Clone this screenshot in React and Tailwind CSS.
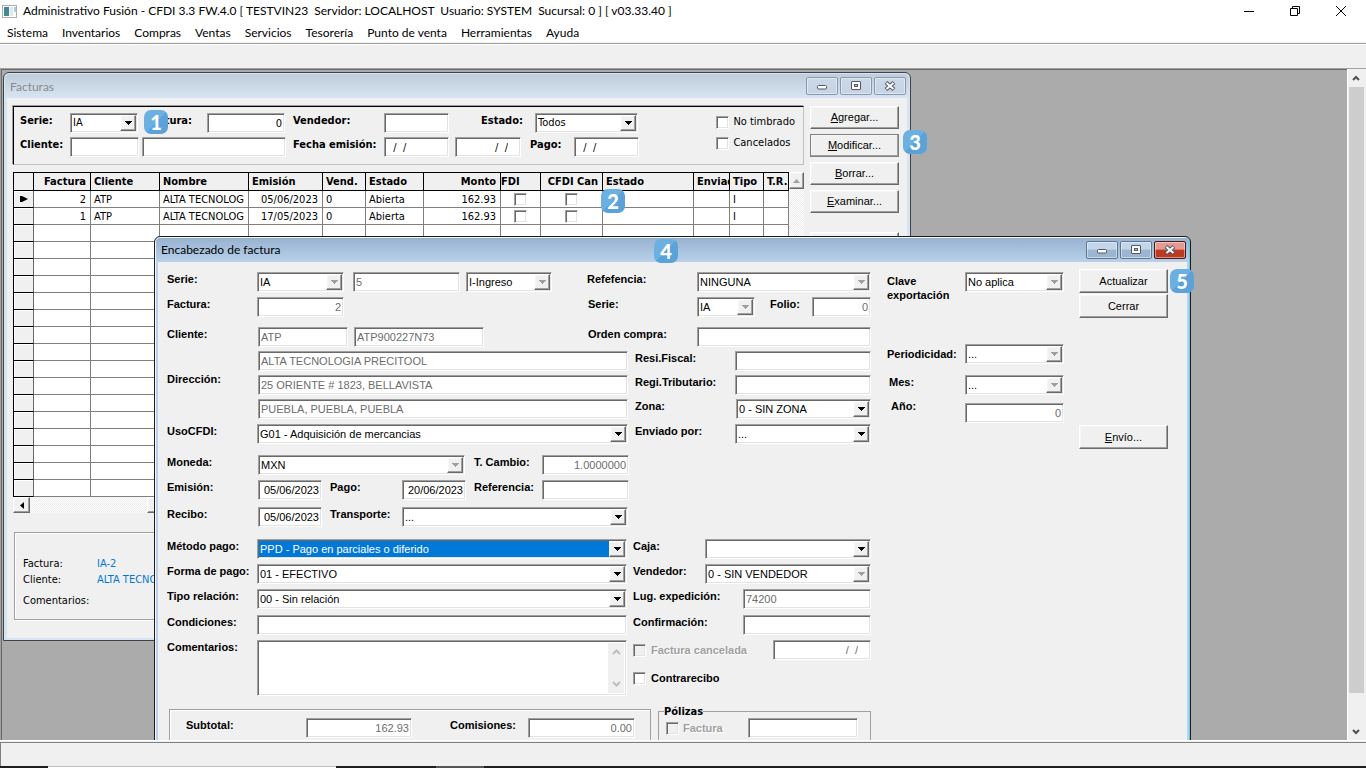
// src/App.jsx

// Purpose: Desktop-style invoicing app: menu bar, MDI workspace, invoice list and invoice header dialog.

import React from 'react'
import clsx from 'clsx'

// --- shared classic bevels ---
const SUNKEN =
  'border border-t-[#a0a0a0] border-l-[#a0a0a0] border-b-white border-r-white shadow-[inset_1px_1px_0_#696969,inset_-1px_-1px_0_#e3e3e3]'
const RAISED =
  'border border-t-white border-l-white border-b-[#696969] border-r-[#696969] shadow-[inset_-1px_-1px_0_#a0a0a0,inset_1px_1px_0_#f6f6f6] bg-[#f0f0f0]'
const DITHER =
  'bg-[repeating-conic-gradient(#ffffff_0_25%,#ececec_0_50%)] bg-[length:2px_2px]'

function Label({ id, className, children }) {
  return (
    <label htmlFor={id} className={clsx('shrink-0 whitespace-nowrap font-bold leading-[14px]', className)}>
      {children}
    </label>
  )
}

function TextBox({ className, ...props }) {
  return (
    <input
      type="text"
      className={clsx('h-5 min-w-0 shrink-0 bg-white px-0.5 outline-none disabled:text-[#6d6d6d]', SUNKEN, className)}
      {...props}
    />
  )
}

function Combo({ id, value, disabled, selected, className, label }) {
  return (
    <div className={clsx('relative h-5 shrink-0 bg-white p-px', SUNKEN, className)}>
      <select
        id={id}
        aria-label={label}
        disabled={disabled}
        defaultValue={value}
        className={clsx(
          'block h-full w-full appearance-none pl-px pr-4 outline-none disabled:opacity-100',
          selected ? 'bg-[#0078d7] text-white' : 'bg-white text-black'
        )}
      >
        <option>{value}</option>
      </select>
      <span
        className={clsx('pointer-events-none absolute inset-y-px right-px flex w-4 items-center justify-center', RAISED)}
      >
        <svg width="7" height="4" viewBox="0 0 7 4" shapeRendering="crispEdges" aria-hidden="true">
          <path d="M0 0h7L3.5 4z" fill={disabled ? '#a0a0a0' : '#000'} />
        </svg>
      </span>
    </div>
  )
}

function Check({ id, disabled, className, label }) {
  return (
    <input
      id={id}
      type="checkbox"
      disabled={disabled}
      aria-label={label}
      className={clsx('block h-[13px] w-[13px] shrink-0 appearance-none bg-white disabled:bg-[#f0f0f0]', SUNKEN, className)}
    />
  )
}

function PushButton({ hotkey, children, className }) {
  return (
    <button type="button" className={clsx('w-full', RAISED, className)}>
      {hotkey && <span className="underline">{hotkey}</span>}
      {children}
    </button>
  )
}

// Numbered help marker
function Badge({ n, className }) {
  return (
    <span
      className={clsx(
        "absolute z-10 flex h-6 w-6 items-center justify-center rounded-[7px] bg-linear-135 from-[#6cb0e2] from-50% to-[#5ba2da] to-50% font-['Lato',sans-serif] text-[20px] font-black leading-none text-white",
        className
      )}
    >
      {n}
    </span>
  )
}

// Minimize / maximize / close of an MDI child
function CaptionButtons({ active }) {
  const base = 'flex h-[18px] w-8 items-center justify-center rounded-[2px] border shadow-[inset_0_0_0_1px_rgba(255,255,255,0.45)]'
  const normal = active
    ? 'border-[#5f7590] bg-linear-to-b from-[#c2d5ea] from-45% to-[#9cb6d2] to-50%'
    : 'border-[#8996ad] bg-linear-to-b from-[#cbd8e6] to-[#c5d3e3]'
  const close = active
    ? 'border-[#4d1614] bg-linear-to-b from-[#e39a8f] from-45% to-[#bd3a22] to-50%'
    : normal
  return (
    <div className="flex gap-0.5 pt-[3px]">
      <button type="button" aria-label="Minimizar" className={clsx(base, normal)}>
        <svg width="12" height="10" viewBox="0 0 12 10">
          <rect x="1.5" y="4.5" width="9" height="3.5" rx="1" fill="#fff" stroke="#535666" />
        </svg>
      </button>
      <button type="button" aria-label="Maximizar" className={clsx(base, normal)}>
        <svg width="12" height="10" viewBox="0 0 12 10">
          <rect x="1.5" y="0.5" width="9" height="8" rx="0.5" fill="#fff" stroke="#535666" />
          <rect x="4.5" y="3.5" width="3" height="2" fill="#b8cbe0" stroke="#535666" />
        </svg>
      </button>
      <button type="button" aria-label="Cerrar ventana" className={clsx(base, close)}>
        <svg width="12" height="10" viewBox="0 0 12 10">
          <path d="M2 1.5l8 7M10 1.5l-8 7" stroke="#535666" strokeWidth="4" />
          <path d="M2.5 2l7 6M9.5 2l-7 6" stroke="#fff" strokeWidth="2" />
        </svg>
      </button>
    </div>
  )
}

// --- invoice list columns ---
const COLUMNS = [
  { name: 'Factura', width: 'w-[57px]', right: true },
  { name: 'Cliente', width: 'w-[69px]' },
  { name: 'Nombre', width: 'w-[89px]' },
  { name: 'Emisión', width: 'w-[74px]', dataRight: true },
  { name: 'Vend.', width: 'w-[43px]' },
  { name: 'Estado', width: 'w-[58px]' },
  { name: 'Monto', width: 'w-[77px]', right: true },
  { name: 'FDI', width: 'w-10', check: true, flush: true },
  { name: 'CFDI Can', width: 'w-[62px]', right: true, check: true },
  { name: 'Estado', width: 'w-[91px]' },
  { name: 'Enviad', width: 'w-9' },
  { name: 'Tipo', width: 'w-[34px]' },
  { name: 'T.R.', width: 'w-[25px]' },
]

const INVOICES = [
  ['2', 'ATP', 'ALTA TECNOLOG', '05/06/2023', '0', 'Abierta', '162.93', '', '', '', '', 'I', ''],
  ['1', 'ATP', 'ALTA TECNOLOG', '17/05/2023', '0', 'Abierta', '162.93', '', '', '', '', 'I', ''],
]

function InvoiceTable() {
  const rows = [...INVOICES, ...Array(16).fill(null)]
  return (
    <table className="w-[775px] table-fixed border-separate border-spacing-0 border-l border-t border-black bg-white">
      <thead>
        <tr className="h-[18px] bg-[#f0f0f0] text-left">
          <th className="w-5 border-b border-r border-black p-0" aria-label="Selector" />
          {COLUMNS.map((c, i) => (
            <th
              key={i}
              className={clsx(
                'overflow-hidden whitespace-nowrap border-b border-r border-black p-0 pt-px leading-4',
                c.width,
                c.right ? 'pr-1 text-right' : c.flush ? '' : 'pl-[3px]'
              )}
            >
              {c.name}
            </th>
          ))}
        </tr>
      </thead>
      <tbody>
        {rows.map((row, r) => (
          <tr key={r} className="h-[17px]">
            <td className="border-b border-r border-b-black border-r-[#696969] bg-[#f0f0f0] p-0 shadow-[inset_1px_1px_0_#fff]">
              {r === 0 && (
                <svg className="ml-1.5" width="9" height="6" viewBox="0 0 9 6" aria-hidden="true">
                  <path d="M0 0h2l6 3-6 3H0z" fill="#000" />
                </svg>
              )}
            </td>
            {COLUMNS.map((c, i) => (
              <td
                key={i}
                className={clsx(
                  'overflow-hidden whitespace-nowrap border-b border-r border-[#808080] p-0',
                  !c.check && 'pt-px leading-[15px]',
                  !c.check && (c.right || c.dataRight ? 'pr-1 text-right' : 'pl-[3px]')
                )}
              >
                {row && (c.check ? <Check className="mx-auto" label={`${c.name} ${row[0]}`} /> : row[i])}
              </td>
            ))}
          </tr>
        ))}
      </tbody>
    </table>
  )
}

function FacturasWindow() {
  return (
    <section className="absolute left-px top-0.5 h-[569px] w-[908px] rounded-t-[6px] border border-[#3f4347] bg-[#d7e4f2] p-px font-['DejaVu_Sans_Condensed',sans-serif] text-[11px]">
      <header className="flex h-6 justify-between rounded-t-[5px] bg-linear-to-b from-[#bfcddb] to-[#d7e4f2] pl-[5px] pr-[3px]">
        <h2 className="pt-[3px] font-['Lato',sans-serif] text-[12px] leading-5 text-[#8b8b8b]">Facturas</h2>
        <CaptionButtons />
      </header>

      <div className="mx-0.5 flex h-[540px] bg-[#f0f0f0] pl-1.5 pt-2">
        <div className="w-[791px]">
          {/* Filters */}
          <div className="relative flex h-[59px] justify-between border border-b-[#c0c0c0] border-l-black border-r-[#c0c0c0] border-t-black pl-1.5 pr-2 pt-1.5 shadow-[-1px_-1px_0_#a0a0a0]">
            <div className="flex flex-col gap-1 [&_label]:pt-px">
              <div className="flex h-5">
                <Label id="f-serie" className="w-[50px]">Serie:</Label>
                <Combo id="f-serie" value="IA" className="w-[68px]" />
                <Label id="f-factura" className="w-[54px] text-right">Factura:</Label>
                <TextBox id="f-factura" defaultValue="0" className="ml-[15px] w-[78px] text-right" />
                <Label id="f-vendedor" className="ml-2 w-[91px]">Vendedor:</Label>
                <TextBox id="f-vendedor" className="w-[65px]" />
                <Label id="f-estado" className="ml-8 w-[54px]">Estado:</Label>
                <Combo id="f-estado" value="Todos" className="w-[103px]" />
              </div>
              <div className="flex h-5">
                <Label id="f-cliente" className="w-[50px]">Cliente:</Label>
                <TextBox id="f-cliente" className="w-[69px]" />
                <TextBox aria-label="Nombre del cliente" className="ml-[3px] w-36" />
                <Label id="f-fecha" className="ml-[7px] w-[91px]">Fecha emisión:</Label>
                <TextBox id="f-fecha" defaultValue="  /  /" className="w-[65px]" />
                <TextBox aria-label="Fecha emisión final" defaultValue="  /  /" className="ml-1.5 w-[66px] pr-3 text-right" />
                <Label id="f-pago" className="ml-[9px] w-11">Pago:</Label>
                <TextBox id="f-pago" defaultValue="  /  /" className="w-[65px]" />
              </div>
            </div>
            <div className="flex flex-col gap-[5px] pt-px">
              <label className="flex items-center gap-1 leading-4"><Check />No timbrado</label>
              <label className="flex items-center gap-1 leading-4"><Check />Cancelados</label>
            </div>
            <Badge n="1" className="left-[130px] top-[3px]" />
          </div>

          {/* Invoice grid with its scroll bars */}
          <div className="relative mt-[7px] flex">
            <InvoiceTable />
            <div className={clsx('w-4', DITHER)}>
              <div className={clsx('flex h-[17px] items-center justify-center', RAISED)}>
                <svg width="7" height="4" viewBox="0 0 7 4"><path d="M0 4h7L3.5 0z" fill="#a0a0a0" /></svg>
              </div>
            </div>
            <Badge n="2" className="left-[588px] top-[17px]" />
          </div>
          <div className={clsx('flex h-4', DITHER)}>
            <div className={clsx('flex w-[17px] items-center justify-center', RAISED)}>
              <svg width="4" height="7" viewBox="0 0 4 7"><path d="M4 0v7L0 3.5z" fill="#000" /></svg>
            </div>
            <div className={clsx('ml-[117px] w-[200px]', RAISED)} />
          </div>

          {/* Detail of the selected invoice */}
          <dl className="ml-px mt-[19px] grid h-[88px] grid-cols-[74px_1fr] content-start border border-[#a0a0a0] pl-2 pt-[23px] leading-4 shadow-[inset_1px_1px_0_#fff,1px_1px_0_#fff]">
            <dt>Factura:</dt>
            <dd className="text-[#0078d7]">IA-2</dd>
            <dt>Cliente:</dt>
            <dd className="text-[#0078d7]">ALTA TECNOLOGIA PRECITOOL</dd>
            <dt className="mt-[5px]">Comentarios:</dt>
          </dl>
        </div>

        <div className="relative ml-1.5 flex w-[89px] flex-col gap-[5px] font-['Liberation_Sans',sans-serif]">
          <PushButton hotkey="A" className="h-[23px]">gregar...</PushButton>
          <PushButton hotkey="M" className="h-[23px] outline outline-[#808080] -outline-offset-1">odificar...</PushButton>
          <PushButton hotkey="B" className="h-[23px]">orrar...</PushButton>
          <PushButton hotkey="E" className="h-[23px]">xaminar...</PushButton>
          <PushButton hotkey="I" className="mt-3.5 h-[23px]">mprimir...</PushButton>
          <Badge n="3" className="left-[93px] top-6" />
        </div>
      </div>
    </section>
  )
}

function EncabezadoWindow() {
  return (
    <section className="absolute left-[152px] top-[166px] h-[600px] w-[1037px] rounded-t-[6px] border border-[#1c1c1c] bg-[#b9d1ea] p-px font-['Liberation_Sans',sans-serif] text-[11px] shadow-[inset_-1px_0_0_#62cfe8,inset_1px_1px_0_#f4f8fc]">
      <header className="flex h-6 justify-between rounded-t-[4px] bg-linear-to-b from-[#97b2d0] to-[#b9d1ea] pl-[5px] pr-[3px]">
        <h2 className="pt-0.5 font-['Lato',sans-serif] text-[12px] leading-5">Encabezado de factura</h2>
        <CaptionButtons active />
      </header>
      <Badge n="4" className="left-[499px] top-0.5" />
      <Badge n="5" className="left-[1015px] top-8" />

      <div className="mx-0.5 flex h-[572px] bg-[#f0f0f0] pl-[9px] pt-[10px]">
        {/* LEFT: main form */}
        <div className="w-[704px]">
          <div className="flex h-5">
            <Label id="serie" className="w-[90px]">Serie:</Label>
            <Combo id="serie" value="IA" disabled className="w-[87px]" />
            <TextBox aria-label="Número de serie" defaultValue="5" disabled className="ml-[9px] w-[107px]" />
            <Combo label="Tipo de comprobante" value="I-Ingreso" disabled className="ml-1.5 w-[86px]" />
            <Label id="refefencia" className="ml-[35px] w-[110px]">Refefencia:</Label>
            <Combo id="refefencia" value="NINGUNA" disabled className="w-[174px]" />
          </div>
          <div className="mt-[5px] flex h-5">
            <Label id="factura" className="w-[90px]">Factura:</Label>
            <TextBox id="factura" defaultValue="2" disabled className="w-[87px] text-right" />
            <Label id="serie-ref" className="ml-[244px] w-[109px]">Serie:</Label>
            <Combo id="serie-ref" value="IA" disabled className="w-[58px]" />
            <Label id="folio" className="ml-[15px] w-[42px]">Folio:</Label>
            <TextBox id="folio" defaultValue="0" disabled className="w-[59px] text-right" />
          </div>
          <div className="mt-[10px] flex h-5">
            <Label id="cliente" className="w-[91px]">Cliente:</Label>
            <TextBox id="cliente" defaultValue="ATP" disabled className="w-[90px]" />
            <TextBox aria-label="RFC" defaultValue="ATP900227N73" disabled className="ml-1.5 w-[130px]" />
            <Label id="orden" className="ml-[104px] w-[109px]">Orden compra:</Label>
            <TextBox id="orden" className="w-[174px]" />
          </div>

          <div className="mt-1 flex">
            <Label id="direccion" className="w-[91px] self-center pb-3">Dirección:</Label>
            <div className="flex w-[370px] flex-col gap-1">
              <TextBox aria-label="Razón social" defaultValue="ALTA TECNOLOGIA PRECITOOL" disabled className="w-full" />
              <TextBox id="direccion" defaultValue="25 ORIENTE # 1823, BELLAVISTA" disabled className="w-full" />
              <TextBox aria-label="Ciudad" defaultValue="PUEBLA, PUEBLA, PUEBLA" disabled className="w-full" />
            </div>
            <div className="ml-[7px] flex flex-col gap-1">
              <div className="flex h-5">
                <Label id="resi" className="w-[100px]">Resi.Fiscal:</Label>
                <TextBox id="resi" className="w-[136px]" />
              </div>
              <div className="flex h-5">
                <Label id="regi" className="w-[100px]">Regi.Tributario:</Label>
                <TextBox id="regi" className="w-[136px]" />
              </div>
              <div className="flex h-5">
                <Label id="zona" className="w-[101px]">Zona:</Label>
                <Combo id="zona" value="0 - SIN ZONA" className="w-[135px]" />
              </div>
            </div>
          </div>

          <div className="mt-[5px] flex h-5">
            <Label id="uso" className="w-[90px]">UsoCFDI:</Label>
            <Combo id="uso" value="G01 - Adquisición de mercancias" className="w-[371px]" />
            <Label id="enviado" className="ml-[7px] w-[100px]">Enviado por:</Label>
            <Combo id="enviado" value="..." className="w-[136px]" />
          </div>

          <div className="mt-[11px] flex h-5">
            <Label id="moneda" className="w-[91px]">Moneda:</Label>
            <Combo id="moneda" value="MXN" disabled className="w-[207px]" />
            <Label id="tcambio" className="ml-[9px] w-[68px]">T. Cambio:</Label>
            <TextBox id="tcambio" defaultValue="1.0000000" disabled className="w-[87px] text-right" />
          </div>
          <div className="mt-[5px] flex h-5">
            <Label id="emision" className="w-[91px]">Emisión:</Label>
            <TextBox id="emision" defaultValue="05/06/2023" className="w-16 text-right" />
            <Label id="pago" className="ml-2 w-[72px]">Pago:</Label>
            <TextBox id="pago" defaultValue="20/06/2023" className="w-16 text-right" />
            <Label id="referencia" className="ml-2 w-[68px]">Referencia:</Label>
            <TextBox id="referencia" className="w-[87px]" />
          </div>
          <div className="mt-[7px] flex h-5">
            <Label id="recibo" className="w-[91px]">Recibo:</Label>
            <TextBox id="recibo" defaultValue="05/06/2023" className="w-16 text-right" />
            <Label id="transporte" className="ml-2 w-[72px]">Transporte:</Label>
            <Combo id="transporte" value="..." className="w-[226px]" />
          </div>

          <div className="mt-3 flex h-5">
            <Label id="metodo" className="w-[90px]">Método pago:</Label>
            <Combo id="metodo" value="PPD - Pago en parciales o diferido" selected className="w-[370px]" />
            <Label id="caja" className="ml-1.5 w-[72px]">Caja:</Label>
            <Combo id="caja" value="" className="w-[166px]" />
          </div>
          <div className="mt-[5px] flex h-5">
            <Label id="forma" className="w-[90px]">Forma de pago:</Label>
            <Combo id="forma" value="01 - EFECTIVO" className="w-[370px]" />
            <Label id="vendedor" className="ml-1.5 w-[72px]">Vendedor:</Label>
            <Combo id="vendedor" value="0 - SIN VENDEDOR" disabled className="w-[166px]" />
          </div>
          <div className="mt-[5px] flex h-5">
            <Label id="relacion" className="w-[90px]">Tipo relación:</Label>
            <Combo id="relacion" value="00 - Sin relación" className="w-[370px]" />
            <Label id="lugar" className="ml-1.5 w-[110px]">Lug. expedición:</Label>
            <TextBox id="lugar" defaultValue="74200" disabled className="w-32" />
          </div>
          <div className="mt-1.5 flex h-5">
            <Label id="condiciones" className="w-[90px]">Condiciones:</Label>
            <TextBox id="condiciones" className="w-[370px]" />
            <Label id="confirmacion" className="ml-1.5 w-[110px]">Confirmación:</Label>
            <TextBox id="confirmacion" className="w-32" />
          </div>

          <div className="mt-[5px] flex h-14">
            <Label id="comentarios" className="w-[90px]">Comentarios:</Label>
            <div className={clsx('flex w-[370px] shrink-0 bg-white p-0.5', SUNKEN)}>
              <textarea id="comentarios" className="h-full flex-1 resize-none outline-none" />
              <div className="flex w-4 flex-col items-center justify-between bg-[#f0f0f0] py-1.5 text-[#bfbfbf]">
                <svg width="9" height="6" viewBox="0 0 9 6" fill="none" stroke="currentColor" strokeWidth="2"><path d="M1 5l3.5-3.5L8 5" /></svg>
                <svg width="9" height="6" viewBox="0 0 9 6" fill="none" stroke="currentColor" strokeWidth="2"><path d="M1 1l3.5 3.5L8 1" /></svg>
              </div>
            </div>
            <div className="ml-1.5 flex flex-1 flex-col gap-2">
              <div className="flex h-5 items-center justify-between">
                <label className="flex items-center gap-[5px] font-bold text-[#a0a0a0] [text-shadow:1px_1px_0_#fff]">
                  <Check disabled />Factura cancelada
                </label>
                <TextBox aria-label="Fecha cancelación" defaultValue="/  /" disabled className="w-[98px] pr-3 text-right" />
              </div>
              <label className="flex h-5 items-center gap-[5px] font-bold"><Check />Contrarecibo</label>
            </div>
          </div>

          {/* Totals */}
          <div className="mt-[13px] flex justify-between pl-0.5">
            <div className="flex h-32 w-[482px] border border-[#a0a0a0] pl-4 pt-2 shadow-[inset_1px_1px_0_#fff]">
              <Label id="subtotal" className="w-[120px]">Subtotal:</Label>
              <TextBox id="subtotal" defaultValue="162.93" disabled className="w-[106px] text-right" />
              <Label id="comisiones" className="ml-[38px] w-[78px]">Comisiones:</Label>
              <TextBox id="comisiones" defaultValue="0.00" disabled className="w-[107px] text-right" />
            </div>
            <fieldset className="-mt-1 h-32 w-[213px] border border-[#a0a0a0] px-[7px]">
              <legend className="-ml-0.5 h-3 font-['DejaVu_Sans_Condensed',sans-serif] font-bold leading-[14px]">Pólizas</legend>
              <div className="flex justify-between pr-[5px] pt-px">
                <label className="flex items-center gap-1 font-bold text-[#a0a0a0] [text-shadow:1px_1px_0_#fff]">
                  <Check disabled />Factura
                </label>
                <TextBox aria-label="Póliza de factura" className="w-[110px]" />
              </div>
            </fieldset>
          </div>
        </div>

        {/* CENTER: export and period */}
        <div className="ml-4 w-[178px]">
          <div className="flex h-5">
            <Label id="clave" className="w-[78px] pt-0.5">Clave<br />exportación</Label>
            <Combo id="clave" value="No aplica" disabled className="w-[99px]" />
          </div>
          <div className="mt-[52px] flex h-5">
            <Label id="periodicidad" className="w-[78px] pt-[3px]">Periodicidad:</Label>
            <Combo id="periodicidad" value="..." disabled className="w-[99px]" />
          </div>
          <div className="mt-[11px] flex h-5">
            <Label id="mes" className="w-[78px] pl-0.5">Mes:</Label>
            <Combo id="mes" value="..." disabled className="w-[99px]" />
          </div>
          <div className="mt-1 flex h-6">
            <Label id="anio" className="w-[78px] pl-1">Año:</Label>
            <TextBox id="anio" defaultValue="0" disabled className="w-[99px] self-end text-right" />
          </div>
        </div>

        {/* RIGHT: actions */}
        <div className="-mt-[3px] ml-3.5 w-[89px]">
          <PushButton className="h-6">Actualizar</PushButton>
          <PushButton className="mt-px h-6">Cerrar</PushButton>
          <PushButton hotkey="E" className="mt-[107px] h-6">nvío...</PushButton>
        </div>
      </div>
    </section>
  )
}

const MENU = ['Sistema', 'Inventarios', 'Compras', 'Ventas', 'Servicios', 'Tesorería', 'Punto de venta', 'Herramientas', 'Ayuda']

export default function App() {
  return (
    <div className="flex h-screen w-full flex-col overflow-hidden bg-[#f0f0f0] font-['Lato',sans-serif] text-[12px] text-black">
      {/* Title bar */}
      <header className="flex h-[22px] shrink-0 items-center justify-between bg-white pl-0.5 pr-5">
        <div className="flex items-center gap-1.5">
          <svg width="15" height="13" viewBox="0 0 15 13" aria-hidden="true">
            <rect x="0.5" y="0.5" width="14" height="12" fill="#fff" stroke="#a9b0b5" />
            <rect x="2" y="2" width="5" height="9" fill="#3e8f83" />
            <rect x="2" y="2" width="5" height="4" fill="#4a7da8" />
            <rect x="8" y="2" width="3" height="9" fill="#dfe8ec" />
            <rect x="12" y="2" width="2" height="5" fill="#a8d0dc" />
          </svg>
          <h1 className="whitespace-pre">
            {'Administrativo Fusión - CFDI 3.3 FW.4.0 [ TESTVIN23  Servidor: LOCALHOST  Usuario: SYSTEM  Sucursal: 0 ] [ v03.33.40 ]'}
          </h1>
        </div>
        <div className="flex items-center gap-9">
          <button type="button" aria-label="Minimizar aplicación">
            <svg width="10" height="10" viewBox="0 0 10 10"><path d="M0 5.5h10" stroke="#000" /></svg>
          </button>
          <button type="button" aria-label="Restaurar aplicación">
            <svg width="10" height="10" viewBox="0 0 10 10" fill="none" stroke="#000"><path d="M.5 2.5h7v7h-7zM2.5 2.5v-2h7v7h-2" /></svg>
          </button>
          <button type="button" aria-label="Cerrar aplicación">
            <svg width="10" height="10" viewBox="0 0 10 10" stroke="#000"><path d="M0 0l10 10M10 0L0 10" /></svg>
          </button>
        </div>
      </header>

      {/* Menu bar */}
      <nav className="flex h-[21px] shrink-0 items-start gap-3.5 border-b border-[#f0f0f0] bg-white pl-[7px] pt-0.5">
        {MENU.map((item) => (
          <button key={item} type="button" className="leading-[18px]">
            {item}
          </button>
        ))}
      </nav>

      {/* Empty toolbar */}
      <div className="h-[25px] shrink-0 border-t border-[#a0a0a0] shadow-[inset_0_1px_0_#fff]" />

      {/* MDI workspace */}
      <main className="flex min-h-0 flex-1 border-l border-t border-[#a0a0a0] pr-0.5">
        <div className="relative flex-1 overflow-hidden border-l border-t border-[#696969] bg-[#ababab]">
          <FacturasWindow />
          <EncabezadoWindow />
        </div>
        <div className="flex w-[17px] flex-col items-center border-l border-white bg-[#f0f0f0] text-[#505050]">
          <div className="flex h-[18px] items-center">
            <svg width="8" height="6" viewBox="0 0 8 6" fill="none" stroke="currentColor" strokeWidth="2"><path d="M1 5l3-3 3 3" /></svg>
          </div>
          <div className="w-[15px] flex-1 bg-[#cdcdcd]" />
          <div className="mt-[30px] flex h-[17px] items-center">
            <svg width="8" height="6" viewBox="0 0 8 6" fill="none" stroke="currentColor" strokeWidth="2"><path d="M1 1l3 3 3-3" /></svg>
          </div>
        </div>
      </main>

      {/* Status bar and the edge of the taskbar */}
      <footer className="shrink-0">
        <div className="h-[26px] border-t border-white">
          <div className="mt-px h-6 border-l border-t border-[#808080]" />
        </div>
        <div className="flex h-0.5 bg-[#1f1f1f]">
          <div className="ml-12 w-72 border-t border-[#c0c0c0] bg-white" />
          <div className="ml-[100px] w-12 bg-[#555]" />
        </div>
      </footer>
    </div>
  )
}
